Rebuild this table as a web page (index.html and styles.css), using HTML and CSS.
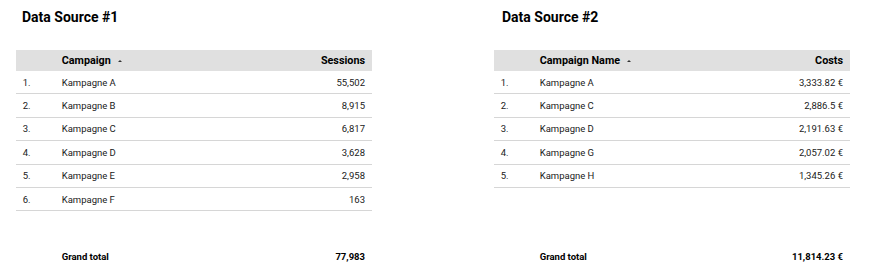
FILE: index.html
```html
<!DOCTYPE html>
<html>
<head>
<meta charset="utf-8">
<link rel="stylesheet" href="styles.css">
</head>
<body>
<div class="page">
  <section class="panel panel--left">
    <h2 class="title">Data Source #1</h2>
    <div class="table">
      <div class="row head">
        <span class="idx"></span>
        <span class="name">Campaign <i class="sort"></i></span>
        <span class="val">Sessions</span>
      </div>
      <div class="row"><span class="idx">1.</span><span class="name">Kampagne A</span><span class="val">55,502</span></div>
      <div class="row"><span class="idx">2.</span><span class="name">Kampagne B</span><span class="val">8,915</span></div>
      <div class="row"><span class="idx">3.</span><span class="name">Kampagne C</span><span class="val">6,817</span></div>
      <div class="row"><span class="idx">4.</span><span class="name">Kampagne D</span><span class="val">3,628</span></div>
      <div class="row"><span class="idx">5.</span><span class="name">Kampagne E</span><span class="val">2,958</span></div>
      <div class="row"><span class="idx">6.</span><span class="name">Kampagne F</span><span class="val">163</span></div>
      <div class="row total"><span class="idx"></span><span class="name">Grand total</span><span class="val">77,983</span></div>
    </div>
  </section>
  <section class="panel panel--right">
    <h2 class="title">Data Source #2</h2>
    <div class="table">
      <div class="row head">
        <span class="idx"></span>
        <span class="name">Campaign Name <i class="sort"></i></span>
        <span class="val">Costs</span>
      </div>
      <div class="row"><span class="idx">1.</span><span class="name">Kampagne A</span><span class="val">3,333.82 €</span></div>
      <div class="row"><span class="idx">2.</span><span class="name">Kampagne C</span><span class="val">2,886.5 €</span></div>
      <div class="row"><span class="idx">3.</span><span class="name">Kampagne D</span><span class="val">2,191.63 €</span></div>
      <div class="row"><span class="idx">4.</span><span class="name">Kampagne G</span><span class="val">2,057.02 €</span></div>
      <div class="row"><span class="idx">5.</span><span class="name">Kampagne H</span><span class="val">1,345.26 €</span></div>
      <div class="row total"><span class="idx"></span><span class="name">Grand total</span><span class="val">11,814.23 €</span></div>
    </div>
  </section>
</div>
</body>
</html>
```

FILE: styles.css
```css
html, body {
  margin: 0;
  padding: 0;
  background: #ffffff;
}

body {
  font-family: Roboto, "Liberation Sans", Arial, sans-serif;
  color: #212121;
  width: 881px;
  height: 279px;
  overflow: hidden;
}

.page {
  display: flex;
  gap: 122px;
  padding-left: 16px;
}

.panel {
  width: 356px;
  height: 268px;
  display: flex;
  flex-direction: column;
}

.title {
  margin: 9px 0 25px 0;
  font-size: 14px;
  line-height: 16px;
  font-weight: 700;
  color: #000000;
  padding-left: 6px;
}

.panel--right .title {
  padding-left: 8px;
}

.table {
  flex: 1;
  display: flex;
  flex-direction: column;
}

.row {
  display: flex;
  align-items: center;
  height: 23.4px;
  box-sizing: border-box;
  border-bottom: 1px solid #d6d6d6;
  font-size: 9.5px;
}

.row.head {
  height: 21px;
  background: #e0e0e0;
  border-bottom: none;
  font-weight: 700;
  font-size: 10.8px;
  color: #000000;
}

.idx {
  width: 39px;
  padding-left: 6.7px;
}

.name {
  flex: 1;
  display: flex;
  align-items: center;
}

.val {
  text-align: right;
  padding-right: 7px;
}

.sort {
  display: inline-block;
  width: 0;
  height: 0;
  margin-left: 7px;
  margin-top: 1px;
  border-left: 2px solid transparent;
  border-right: 2px solid transparent;
  border-bottom: 2px solid #333333;
}

.row.total {
  margin-top: auto;
  height: 23px;
  border-bottom: none;
  font-weight: 700;
  color: #000000;
}
```
